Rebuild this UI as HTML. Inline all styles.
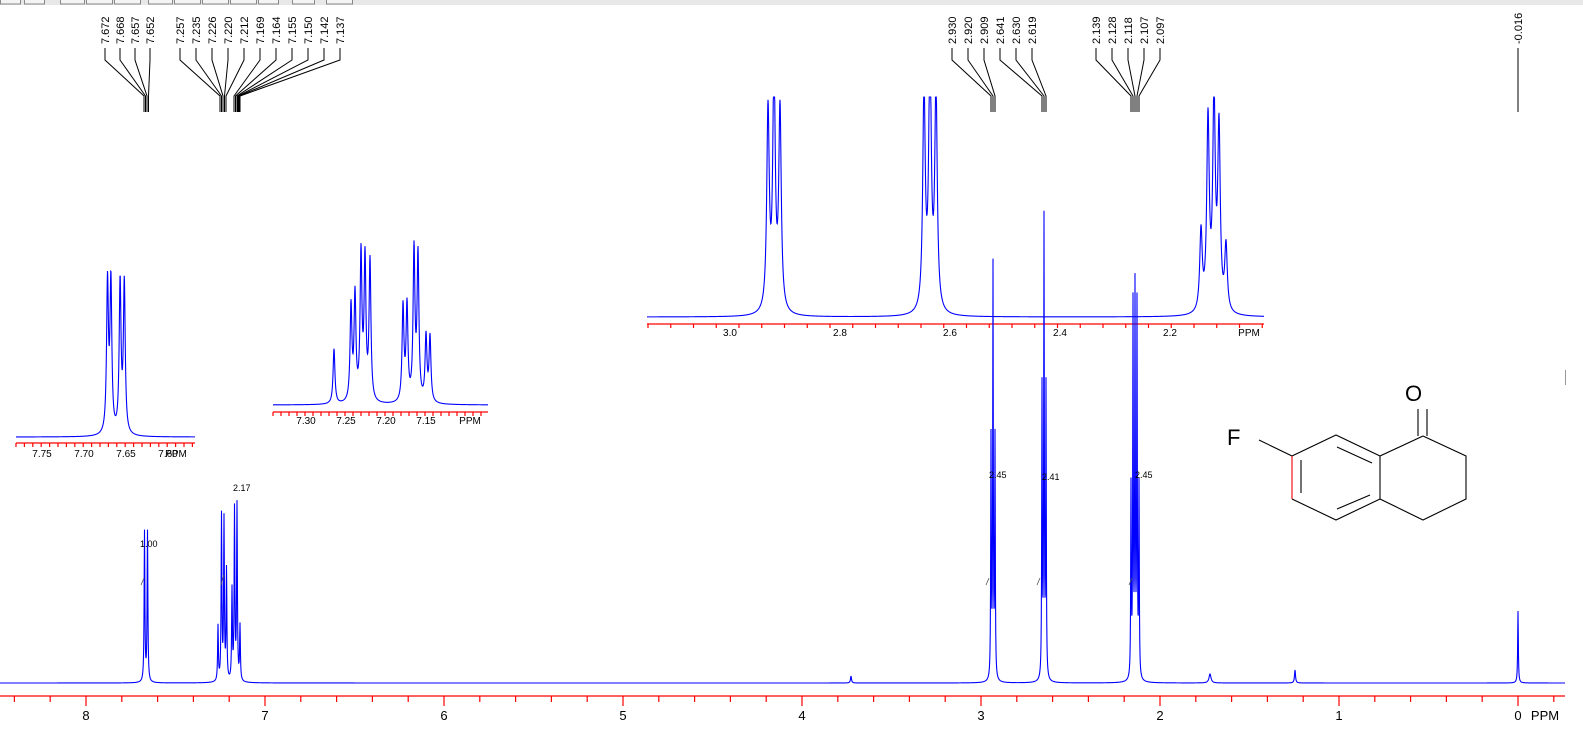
<!DOCTYPE html>
<html><head><meta charset="utf-8"><style>
html,body{margin:0;padding:0;background:#fff;width:1583px;height:729px;overflow:hidden}
svg{display:block;font-family:"Liberation Sans",Arial,sans-serif}
</style></head><body>
<svg id="s" width="1583" height="729" viewBox="0 0 1583 729" xmlns="http://www.w3.org/2000/svg">
<rect x="0" y="0" width="1583" height="5" fill="#e8e8e8"/>
<g fill="#f4f4f4" stroke="#888" stroke-width="1">
<rect x="0.5" y="-3" width="20" height="7"/><rect x="24.5" y="-3" width="20" height="7"/>
<rect x="60.5" y="-3" width="24" height="7"/><rect x="86.5" y="-3" width="26" height="7"/><rect x="114.5" y="-3" width="26" height="7"/>
<rect x="148.5" y="-3" width="24" height="7"/><rect x="174.5" y="-3" width="26" height="7"/><rect x="202.5" y="-3" width="26" height="7"/><rect x="230.5" y="-3" width="26" height="7"/><rect x="258.5" y="-3" width="20" height="7"/>
<rect x="292.5" y="-3" width="22" height="7"/><rect x="326.5" y="-3" width="26" height="7"/>
</g>
<line x1="1565.5" y1="370" x2="1565.5" y2="385" stroke="#999"/>
<g id="labels" font-size="11" fill="#000"></g>
<g id="leaders" stroke="#000" stroke-width="1" fill="none"></g>
<g id="axes" stroke="#f00" stroke-width="1.2" fill="none"></g>
<g id="spec" stroke="#00f" stroke-width="1.1" fill="none"></g>
<g id="ax" font-size="11" fill="#000" text-anchor="middle"></g>
<g id="integ" stroke="#555" stroke-width="0.8" fill="none"></g>
<g font-size="9" fill="#000">
<text x="140" y="547">1.00</text><text x="233" y="491">2.17</text>
<text x="989" y="478">2.45</text><text x="1042" y="480">2.41</text><text x="1135" y="478">2.45</text>
</g>
<g stroke="#000" stroke-width="1.1" fill="none">
<line x1="1418" y1="409" x2="1418" y2="436"/><line x1="1427" y1="409" x2="1427" y2="436"/>
<polyline points="1423,436 1466,456 1466,499 1423,520 1380,499 1380,456 1423,436"/>
<polyline points="1380,456 1336,435 1292,456"/>
<polyline points="1292,499 1336,520 1380,499"/>
<line x1="1292" y1="456" x2="1259" y2="440"/>
<line x1="1337" y1="447" x2="1372" y2="463"/>
<line x1="1301" y1="460" x2="1301" y2="493"/>
<line x1="1337" y1="509" x2="1370" y2="495"/>
<line x1="1292" y1="456" x2="1292" y2="499" stroke="#e00"/>
</g>
<text x="1405" y="401" font-size="22" fill="#000">O</text>
<text x="1227" y="445" font-size="22" fill="#000">F</text>
</svg>
<script>
var NS="http://www.w3.org/2000/svg";
function el(p,t,a,txt){var e=document.createElementNS(NS,t);for(var k in a)e.setAttribute(k,a[k]);if(txt!==undefined)e.textContent=txt;document.getElementById(p).appendChild(e);return e;}
function spec(x0,x1,base,peaks,w,clip){var d="";for(var x=x0;x<=x1;x+=0.25){var y=base;for(var i=0;i<peaks.length;i++){var p=peaks[i];var ww=p[2]||w;y-=p[1]/(1+Math.pow((x-p[0])/ww,2));}if(clip!==undefined&&y<clip)y=clip;d+=(d?"L":"M")+x.toFixed(2)+" "+y.toFixed(2);}el("spec","path",{d:d});}
spec(0,1565,683,[[144.5,150],[147.5,150],[218,55],[221.5,165],[224,160],[226.5,110],[232,90],[234.5,170],[237,175],[240,55],[991,240,0.35],[993,410,0.35],[995,240,0.35],[1042,290,0.35],[1044,455,0.35],[1046,290,0.35],[1131,190,0.35],[1133,370,0.35],[1135,385,0.35],[1137,370,0.35],[1139,190,0.35],[1518,72,0.4],[1295,13,0.6],[1210,9,1.2],[851,7,0.6]],0.45);
el("axes","line",{x1:0,y1:696,x2:1565,y2:696});
for(var i=-1;i<50;i++){var x=1518-35.8*i;if(x<0||x>1565)continue;var maj=(i%5==0);el("axes","line",{x1:x,y1:696,x2:x,y2:maj?706:702});if(maj)el("ax","text",{x:x,y:720,"font-size":13},String(i/5));}
el("ax","text",{x:1545,y:720,"font-size":13},"PPM");
spec(16,195,437,[[107.5,150,1.1],[110.9,150,1.1],[120.1,150,1.1],[124.3,150,1.1]],1);
el("axes","line",{x1:16,y1:443,x2:195,y2:443});
for(var x=16;x<=195;x+=8.4)el("axes","line",{x1:x,y1:443,x2:x,y2:447});
[[42,"7.75"],[84,"7.70"],[126,"7.65"],[168,"7.60"],[176,"PPM"]].forEach(function(a){el("ax","text",{x:a[0],y:457,"font-size":10},a[1]);});
spec(273,488,405,[[334,55],[351,95],[355,105],[361,145],[365,140],[370,140],[403,95],[407,95],[414,150],[418,145],[426,65],[430,65]],1.1);
el("axes","line",{x1:273,y1:412,x2:488,y2:412});
for(var x=273;x<=488;x+=8)el("axes","line",{x1:x,y1:412,x2:x,y2:416});
[[306,"7.30"],[346,"7.25"],[386,"7.20"],[426,"7.15"],[470,"PPM"]].forEach(function(a){el("ax","text",{x:a[0],y:424,"font-size":10},a[1]);});
spec(647,1264,317,[[768,200,1.5],[774,240,1.5],[780,200,1.5],[924,220,1.5],[930,260,1.5],[936,220,1.5],[1201,80,1.5],[1208,190,1.5],[1214,210,1.5],[1219,180,1.5],[1226,65,1.5]],1.5,97);
el("axes","line",{x1:647,y1:324,x2:1264,y2:324});
for(var x=648;x<=1264;x+=22.75)el("axes","line",{x1:x,y1:324,x2:x,y2:328});
[[730,"3.0"],[840,"2.8"],[950,"2.6"],[1060,"2.4"],[1170,"2.2"],[1249,"PPM"]].forEach(function(a){el("ax","text",{x:a[0],y:336,"font-size":10},a[1]);});
function grp(labs,xs,targets){for(var i=0;i<labs.length;i++){var x=xs[i];el("labels","text",{transform:"translate("+(x+4)+",44) rotate(-90)"},labs[i]);el("leaders","polyline",{points:x+",48 "+x+",60 "+targets[i]+",96 "+targets[i]+",112"});}}
grp(["7.672","7.668","7.657","7.652"],[105,120,135,150],[144,145.5,147,148.5]);
grp(["7.257","7.235","7.226","7.220","7.212","7.169","7.164","7.155","7.150","7.142","7.137"],[180,196,212,228,244,260,276,292,308,324,340],[220,221.5,223,224.5,226,234,235.5,237,238,239,240]);
grp(["2.930","2.920","2.909","2.641","2.630","2.619"],[952,968,984,1000,1016,1032],[991,993,995,1042,1044,1046]);
grp(["2.139","2.128","2.118","2.107","2.097"],[1096,1112,1128,1144,1160],[1131,1133,1135,1137,1139]);
el("labels","text",{transform:"translate(1522,44) rotate(-90)"},"-0.016");
el("leaders","line",{x1:1518,y1:48,x2:1518,y2:112});
["M141 585 L144 578","M221 585 L224 575","M986 585 L989 578","M1037 585 L1040 578","M1129 585 L1132 578"].forEach(function(d){el("integ","path",{d:d});});
</script>
</body></html>
